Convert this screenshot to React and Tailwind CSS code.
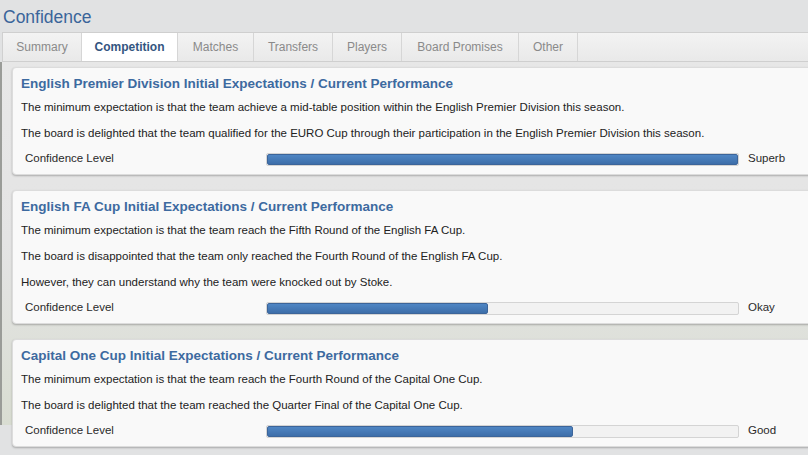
import React from "react";

const tabs = ["Summary", "Competition", "Matches", "Transfers", "Players", "Board Promises", "Other"];
const tabWidths = ["w-[79px]", "w-[96px]", "w-[76px]", "w-[79px]", "w-[69px]", "w-[117px]", "w-[59px]"];

const sections = [
  {
    title: "English Premier Division Initial Expectations / Current Performance",
    lines: [
      "The minimum expectation is that the team achieve a mid-table position within the English Premier Division this season.",
      "The board is delighted that the team qualified for the EURO Cup through their participation in the English Premier Division this season.",
    ],
    level: 100,
    label: "Superb",
  },
  {
    title: "English FA Cup Initial Expectations / Current Performance",
    lines: [
      "The minimum expectation is that the team reach the Fifth Round of the English FA Cup.",
      "The board is disappointed that the team only reached the Fourth Round of the English FA Cup.",
      "However, they can understand why the team were knocked out by Stoke.",
    ],
    level: 47,
    label: "Okay",
  },
  {
    title: "Capital One Cup Initial Expectations / Current Performance",
    lines: [
      "The minimum expectation is that the team reach the Fourth Round of the Capital One Cup.",
      "The board is delighted that the team reached the Quarter Final of the Capital One Cup.",
    ],
    level: 65,
    label: "Good",
  },
];

const ConfidenceBar = ({ level, label }) => (
  <div className="flex items-center h-[26px]">
    <span className="w-[245px] pl-[4px] text-[11.5px] text-[#2a2a2a]">Confidence Level</span>
    <div className="w-[473px] h-[13px] rounded-[2px] border border-[#d4d4d4] bg-[#f2f2f2] overflow-hidden">
      <div
        className="h-full rounded-[2px] bg-gradient-to-b from-[#4f86c4] to-[#3d6ea9] border border-[#3c659a]"
        style={{ width: `${level}%` }}
      />
    </div>
    <span className="ml-[9px] text-[11.5px] text-[#2a2a2a]">{label}</span>
  </div>
);

const App = () => {
  return (
    <div
      className="w-[808px] h-[455px] overflow-hidden bg-[#e1e2e3]"
      style={{ fontFamily: '"Liberation Sans", Arial, sans-serif' }}
    >
      {/* Header */}
      <div className="h-[32px] flex items-center pl-[3px] pt-[3px]">
        <h1 className="text-[17.5px] text-[#3a659a] leading-none">Confidence</h1>
      </div>

      {/* Tabs */}
      <div className="flex h-[30px] border-t border-b border-[#cfcfcf] bg-gradient-to-b from-[#f3f3f3] to-[#e9e9e9] ml-[2px] border-l border-l-[#d0d0d0]">
        {tabs.map((t, i) => (
          <div
            key={t}
            className={`${tabWidths[i]} flex items-center justify-center border-r border-[#d6d6d6] text-[12px] ${
              t === "Competition" ? "bg-white text-[#33557f] font-semibold" : "text-[#8a8a8a]"
            }`}
          >
            {t}
          </div>
        ))}
      </div>

      {/* Content */}
      <div className="h-[363px] bg-gradient-to-b from-[#e7e7e7] via-[#e4e4e4] to-[#d9ddd2] border-l-[2px] border-l-[#9a9c98] pl-[1px] pt-[5px] flex flex-col gap-[15px]">
        {sections.map((s) => (
          <div
            key={s.title}
            className="ml-[9px] w-[820px] rounded-[4px] bg-[#f9f9f9] shadow-[0_1px_2px_rgba(0,0,0,0.25)] border border-[#dcdcdc] pt-[7px] pb-[2px] pl-[8px]"
          >
            <h2 className="h-[19px] leading-[18px] text-[13.5px] font-bold text-[#3d6aa0]">{s.title}</h2>
            {s.lines.map((l) => (
              <p key={l} className="leading-[26px] text-[11.5px] text-[#222]">
                {l}
              </p>
            ))}
            <ConfidenceBar level={s.level} label={s.label} />
          </div>
        ))}
      </div>
    </div>
  );
};

export default App;
